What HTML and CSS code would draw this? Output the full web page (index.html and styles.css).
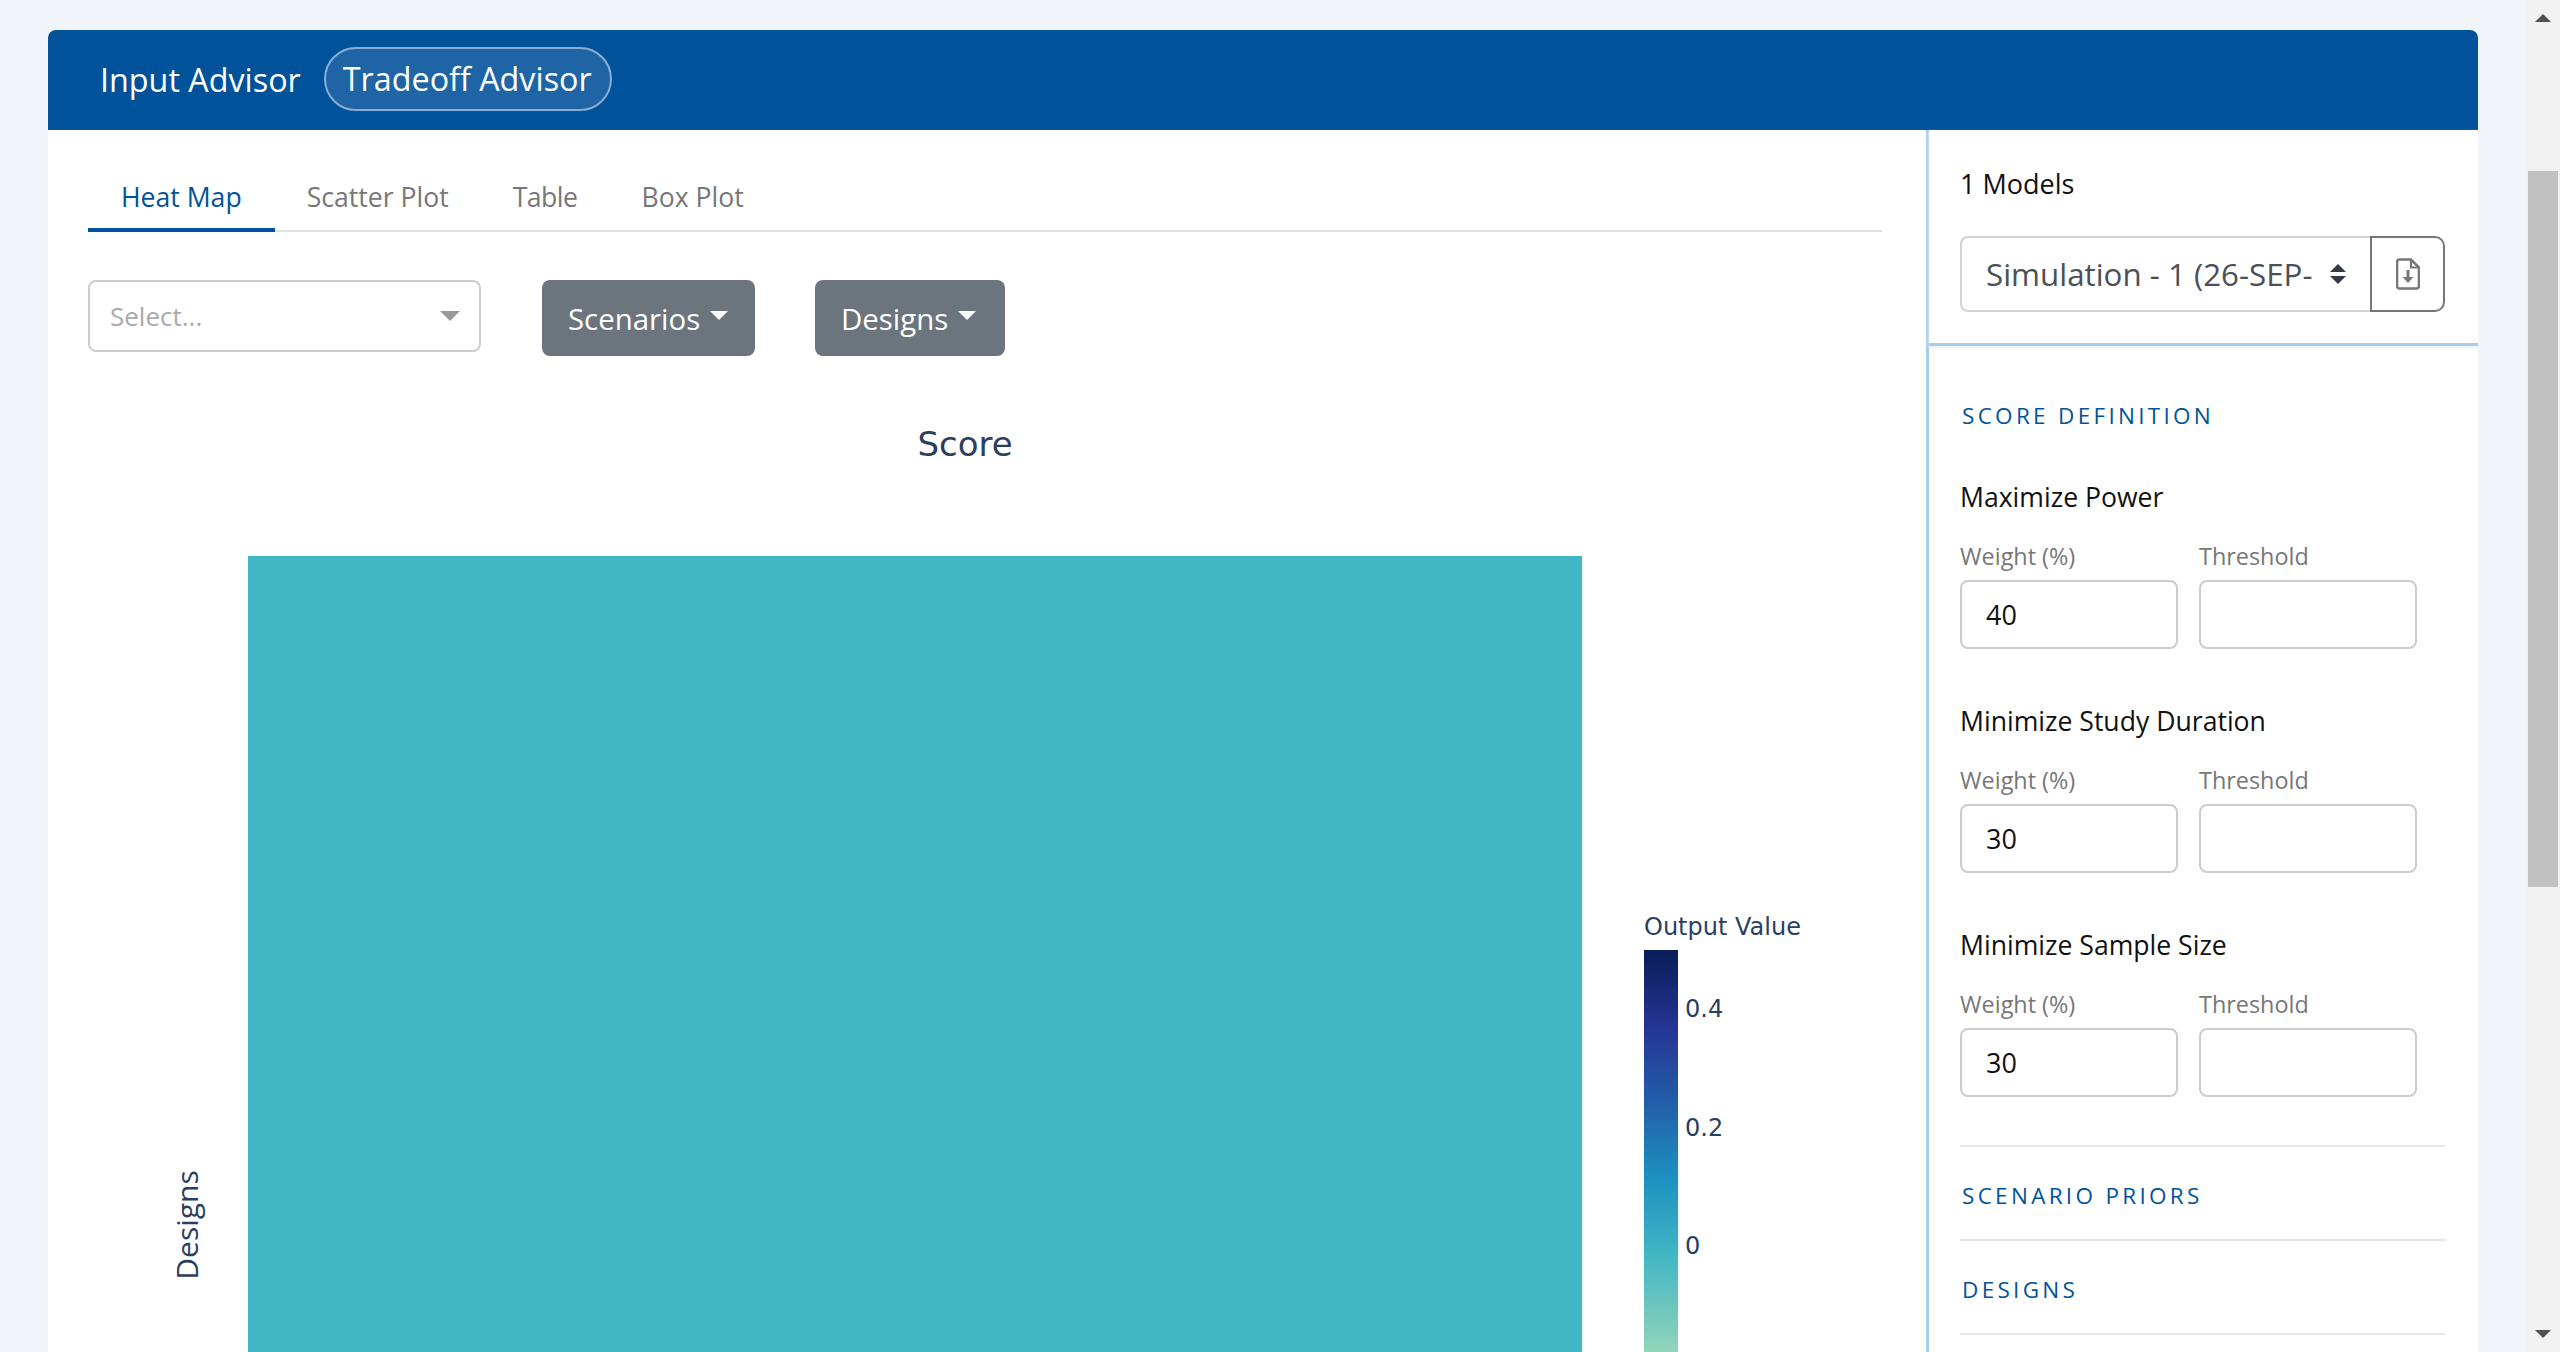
FILE: index.html
```html
<!DOCTYPE html>
<html lang="en">
  <head>
    <meta charset="UTF-8" />
    <meta name="viewport" content="width=device-width, initial-scale=1.0" />
    <link rel="stylesheet" href="styles.css">
    <title>Tradeoff Advisor</title>
  </head>

  <body>
    <div class="page">
      <div class="card">
        <header class="topBar">
          <a class="topLink">Input Advisor</a>
          <a class="topLink active">Tradeoff Advisor</a>
        </header>

        <div class="cardBody">
          <section class="mainSection">
            <nav class="tabs">
              <a class="tab active">Heat Map</a>
              <a class="tab">Scatter Plot</a>
              <a class="tab tabTable">Table</a>
              <a class="tab">Box Plot</a>
            </nav>

            <div class="toolbar">
              <div class="selectBox">
                <span class="placeholder">Select...</span>
                <span class="selectArrow"></span>
              </div>
              <button class="dropBtn scenariosBtn">Scenarios<span class="caret"></span></button>
              <button class="dropBtn designsBtn">Designs<span class="caret"></span></button>
            </div>

            <!-- chart uses page coordinates in the viewBox -->
            <svg class="chart" viewBox="88 400 1794 952">
              <defs>
                <linearGradient id="ylgnbu" x1="0" y1="0" x2="0" y2="1">
                  <stop offset="0" stop-color="#081d58" />
                  <stop offset="0.143" stop-color="#253494" />
                  <stop offset="0.286" stop-color="#225ea8" />
                  <stop offset="0.429" stop-color="#1d91c0" />
                  <stop offset="0.571" stop-color="#41b6c4" />
                  <stop offset="0.714" stop-color="#7fcdbb" />
                  <stop offset="0.857" stop-color="#c7e9b4" />
                  <stop offset="1" stop-color="#edf8b1" />
                </linearGradient>
              </defs>
              <text class="chartTitle" x="965" y="456" text-anchor="middle">Score</text>
              <rect x="248" y="556" width="1334" height="1044" fill="#41b6c4" />
              <text class="axisTitle" transform="translate(198 1225) rotate(-90)" text-anchor="middle">Designs</text>
              <text class="legendText" x="1644" y="935">Output Value</text>
              <rect x="1644" y="950" width="34" height="532" fill="url(#ylgnbu)" />
              <text class="legendText" x="1685" y="1017">0.4</text>
              <text class="legendText" x="1685" y="1136">0.2</text>
              <text class="legendText" x="1685" y="1254">0</text>
            </svg>
          </section>

          <aside class="sidePanel">
            <div class="modelBlock">
              <div class="modelCount">1 Models</div>
              <div class="modelPicker">
                <div class="modelSelect">
                  <span class="modelName">Simulation - 1 (26-SEP-</span>
                  <svg class="updown" viewBox="0 0 16 20">
                    <path d="M8 0l8 8H0zM8 20l8-8H0z" fill="#343a40" />
                  </svg>
                </div>
                <button class="fileBtn">
                  <svg class="fileIcon" viewBox="0 0 24 32">
                    <path d="M3.500 1.500h11.500l8 8V28a2.500 2.500 0 0 1-2.500 2.500H3.500A2.500 2.500 0 0 1 1 28V4A2.500 2.500 0 0 1 3.500 1.500z" fill="none" stroke="#777" stroke-width="2.600" />
                    <path d="M15 1.500v8h8" fill="none" stroke="#777" stroke-width="2.200" />
                    <path d="M10.500 12h3v7h4l-5.500 6-5.500-6h4z" fill="#777" />
                  </svg>
                </button>
              </div>
            </div>

            <div class="scoreBlock">
              <h4 class="sectionTitle">SCORE DEFINITION</h4>

              <div class="objective">
                <div class="objectiveName">Maximize Power</div>
                <div class="fieldRow">
                  <label class="field">Weight (%)<input type="text" value="40" /></label>
                  <label class="field">Threshold<input type="text" /></label>
                </div>
              </div>

              <div class="objective">
                <div class="objectiveName">Minimize Study Duration</div>
                <div class="fieldRow">
                  <label class="field">Weight (%)<input type="text" value="30" /></label>
                  <label class="field">Threshold<input type="text" /></label>
                </div>
              </div>

              <div class="objective">
                <div class="objectiveName">Minimize Sample Size</div>
                <div class="fieldRow">
                  <label class="field">Weight (%)<input type="text" value="30" /></label>
                  <label class="field">Threshold<input type="text" /></label>
                </div>
              </div>

              <h4 class="sectionTitle collapsed firstCollapsed">SCENARIO PRIORS</h4>
              <h4 class="sectionTitle collapsed">DESIGNS</h4>
            </div>
          </aside>
        </div>
      </div>
    </div>

    <div class="scrollbar">
      <span class="arrowUp"></span>
      <div class="thumb"></div>
      <span class="arrowDown"></span>
    </div>
  </body>
</html>
```
FILE: styles.css
```css
body {
  display: flex;
  height: 1352px;
  margin: 0px;
  overflow: hidden;
  background-color: #f1f5f9;
  font-family: "Open Sans", "Noto Sans", sans-serif;
  font-size: 27px;
}
.page {
  flex: 1;
  min-width: 0;
  padding: 30px 48px 0px;
}
.card {
  display: flex;
  flex-direction: column;
  height: 1322px;
  background-color: white;
  border-radius: 8px 8px 0px 0px;
  overflow: hidden;
}

/* top bar */
.topBar {
  display: flex;
  align-items: center;
  gap: 23px;
  flex: none;
  box-sizing: border-box;
  height: 100px;
  padding: 0px 52px 2px;
  background-color: #00539b;
}
.topLink {
  color: white;
  font-size: 32.3px;
  line-height: 42px;
}
.topLink.active {
  padding: 8px 18px 10px 17px;
  background-color: #1f65a6;
  border: 2px solid #8aafd2;
  border-radius: 32px;
}

.cardBody {
  display: flex;
  flex: 1;
  min-height: 0;
}

/* left side */
.mainSection {
  flex: 1;
  min-width: 0;
  padding: 0px 44px 0px 40px;
}
.tabs {
  display: flex;
  height: 102px;
  align-items: flex-end;
  border-bottom: 2px solid #dee2e6;
  box-sizing: border-box;
}
.tab {
  padding: 0px 32px 12px;
  margin-bottom: -2px;
  color: #777;
  font-size: 26.6px;
  line-height: 38px;
  border-bottom: 4px solid transparent;
}
.tab.active {
  padding: 0px 33px 12px;
  color: #00539b;
  border-bottom-color: #00539b;
}
.tabTable {
  letter-spacing: -0.5px;
}
.toolbar {
  display: flex;
  margin-top: 48px;
  align-items: flex-start;
}
.selectBox {
  display: flex;
  align-items: center;
  justify-content: space-between;
  box-sizing: border-box;
  width: 393px;
  height: 72px;
  padding: 0px 19px 0px 20px;
  border: 2px solid #ccc;
  border-radius: 8px;
}
.placeholder {
  color: #aaa;
  font-size: 26px;
}
.selectArrow {
  width: 0;
  height: 0;
  border-left: 10px solid transparent;
  border-right: 10px solid transparent;
  border-top: 10px solid #999;
}
.dropBtn {
  display: flex;
  align-items: center;
  box-sizing: border-box;
  height: 76px;
  padding: 2px 0px 0px 26px;
  background-color: #6c757d;
  border: none;
  border-radius: 8px;
  color: white;
  font-family: inherit;
  font-size: 29.4px;
}
.scenariosBtn {
  width: 213px;
  margin-left: 61px;
}
.designsBtn {
  width: 190px;
  margin-left: 60px;
}
.caret {
  width: 0;
  height: 0;
  margin: 0px 0px 8px 10px;
  border-left: 9px solid transparent;
  border-right: 9px solid transparent;
  border-top: 9px solid white;
}
.chart {
  display: block;
  width: 1794px;
  height: 952px;
  margin-top: 44px;
}
.chartTitle {
  fill: #2a3f5f;
  font-family: "DejaVu Sans", sans-serif;
  font-size: 34px;
}
.axisTitle {
  fill: #2a3f5f;
  font-family: "Open Sans", sans-serif;
  font-size: 30px;
}
.legendText {
  fill: #2a3f5f;
  font-family: "DejaVu Sans", sans-serif;
  font-size: 24px;
}

/* right side */
.sidePanel {
  flex: none;
  box-sizing: border-box;
  width: 552px;
  border-left: 3px solid #a8cdea;
}
.modelBlock {
  box-sizing: border-box;
  height: 216px;
  padding: 33px 33px 0px 31px;
  border-bottom: 3px solid #a8cdea;
  box-shadow: 0px 2px 3px #eee;
}
.modelCount {
  color: #111;
  line-height: 42px;
}
.modelPicker {
  display: flex;
  margin-top: 31px;
  height: 76px;
}
.modelSelect {
  display: flex;
  flex: 1;
  align-items: center;
  min-width: 0;
  padding: 0px 24px;
  border: 2px solid #ced4da;
  border-right: none;
  border-radius: 8px 0px 0px 8px;
}
.modelName {
  flex: 1;
  color: #495057;
  font-size: 31.3px;
  white-space: nowrap;
}
.updown {
  flex: none;
  width: 16px;
  height: 20px;
  margin-left: 12px;
}
.fileBtn {
  display: flex;
  align-items: center;
  justify-content: center;
  box-sizing: border-box;
  width: 75px;
  padding: 0px;
  background-color: white;
  border: 2px solid #777;
  border-radius: 0px 10px 10px 0px;
}
.fileIcon {
  width: 24px;
  height: 32px;
}
.scoreBlock {
  padding: 51px 33px 0px 31px;
}
.sectionTitle {
  margin: 0px;
  padding-left: 2px;
  color: #00539b;
  font-size: 22.5px;
  font-weight: 400;
  line-height: 38px;
  letter-spacing: 3.3px;
}
.sectionTitle.collapsed {
  padding-top: 30px;
  padding-bottom: 24px;
  border-bottom: 2px solid #e6e6e6;
}
.sectionTitle.firstCollapsed {
  margin-top: 38px;
  border-top: 2px solid #e6e6e6;
}
.objective {
  height: 224px;
  padding-top: 43px;
  box-sizing: border-box;
}
.objectiveName {
  color: #111;
  font-size: 26.6px;
  line-height: 38px;
}
.fieldRow {
  display: flex;
  gap: 21px;
  margin-top: 23px;
}
.field {
  display: flex;
  flex-direction: column;
  width: 218px;
  color: #777;
  font-size: 23.4px;
  line-height: 34px;
}
.field input {
  box-sizing: border-box;
  width: 100%;
  height: 69px;
  margin-top: 7px;
  padding: 0px 24px;
  background-color: white;
  border: 2px solid #ccc;
  border-radius: 8px;
  color: #111;
  font-family: inherit;
  font-size: 27px;
}

/* page scrollbar */
.scrollbar {
  display: flex;
  flex-direction: column;
  align-items: center;
  flex: none;
  position: relative;
  width: 34px;
  height: 1352px;
  background-color: #f1f1f1;
}
.arrowUp, .arrowDown {
  position: absolute;
  width: 0;
  height: 0;
  border-left: 8px solid transparent;
  border-right: 8px solid transparent;
}
.arrowUp {
  top: 14px;
  border-bottom: 8px solid #505050;
}
.arrowDown {
  bottom: 14px;
  border-top: 8px solid #505050;
}
.thumb {
  width: 30px;
  height: 716px;
  margin-top: 171px;
  background-color: #c1c1c1;
}
```
